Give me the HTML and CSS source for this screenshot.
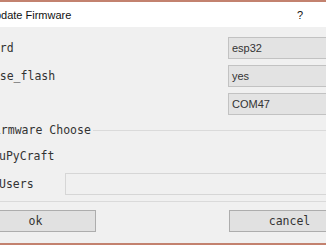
FILE: index.html
```html
<!DOCTYPE html>
<html lang="en">
<head>
    <meta charset="UTF-8">
    <meta name="viewport" content="width=device-width, initial-scale=1.0">
    <title>Update Firmware</title>
    <link rel="stylesheet" href="styles.css">
</head>
<body>
    <div class="dialog">
        <div class="titlebar">
            <span class="title">Update Firmware</span>
            <span class="help">?</span>
        </div>

        <div class="content">
            <div class="form">
                <label>board</label>
                <div class="field">esp32</div>
                <label>erase_flash</label>
                <div class="field">yes</div>
                <label>com</label>
                <div class="field">COM47</div>
            </div>

            <fieldset class="group">
                <legend>Firmware Choose</legend>
                <div class="choice">
                    <span class="radio checked"></span>
                    <span class="choice-label">uPyCraft</span>
                </div>
                <div class="choice">
                    <span class="radio"></span>
                    <span class="choice-label">Users</span>
                    <div class="path"></div>
                </div>
            </fieldset>

            <div class="buttons">
                <button>ok</button>
                <button>cancel</button>
            </div>
        </div>
    </div>
</body>
</html>
```

FILE: styles.css
```css
html, body {
    margin: 0;
    height: 100%;
}

body {
    background: #f0f0f0;
    overflow: hidden;
    box-sizing: border-box;
    border-top: 2px solid #c3826f;
    border-bottom: 2px solid #c3826f;
    color: #333;
}

.dialog {
    width: 375px;
    margin-left: -25px;
}

.titlebar {
    height: 25px;
    background: #fff;
    display: flex;
    align-items: center;
    justify-content: space-between;
    padding: 0 47px 0 12px;
    font-family: "Liberation Sans", Arial, sans-serif;
    font-size: 11px;
    color: #111;
}

.help {
    font-size: 11px;
}

.content {
    padding-top: 10px;
}

.form {
    display: grid;
    grid-template-columns: 249px 1fr;
    grid-auto-rows: 22px;
    row-gap: 6px;
    padding: 0 10px 0 4px;
    align-items: center;
}

.form label,
legend,
.choice-label,
button {
    font-family: "DejaVu Sans Mono", monospace;
    font-size: 11.5px;
    color: #333;
}

.field {
    height: 22px;
    box-sizing: border-box;
    background: #e3e3e3;
    border: 1px solid #c2c2c2;
    padding: 0 3px;
    line-height: 20px;
    font-family: "Liberation Sans", Arial, sans-serif;
    font-size: 11px;
    color: #333;
}

.group {
    margin: 8px 10px 0 4px;
    padding: 9px 0 6px 5px;
    border: 1px solid #dadada;
    min-width: 0;
}

legend {
    padding: 0 2px;
    line-height: 14px;
}

.choice {
    display: flex;
    align-items: center;
    height: 20px;
}

.choice + .choice {
    height: 22px;
    margin-top: 7px;
}

.radio {
    width: 11px;
    height: 11px;
    border: 1px solid #999;
    border-radius: 50%;
    background: #fff;
    margin: 0 2px 0 1px;
    box-sizing: border-box;
}

.radio.checked {
    background: radial-gradient(circle, #333 2.5px, #fff 3px);
}

.choice-label {
    width: 66px;
}

.path {
    flex: 1;
    height: 22px;
    box-sizing: border-box;
    border: 1px solid #d6d6d6;
    background: #f0f0f0;
    margin-right: 10px;
}

.buttons {
    display: flex;
    justify-content: space-between;
    margin-top: 8px;
}

button {
    width: 121px;
    height: 22px;
    background: #e1e1e1;
    border: 1px solid #adadad;
    border-radius: 0;
    padding: 0;
}
```
